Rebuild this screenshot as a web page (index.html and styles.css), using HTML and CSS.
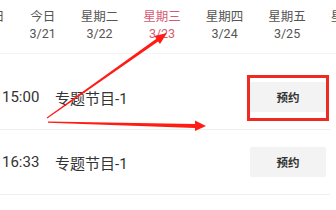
FILE: index.html
```html
<!DOCTYPE html>
<html>
<head>
<meta charset="utf-8">
<link rel="stylesheet" href="styles.css">
</head>
<body>
<div class="page">
  <div class="tabs">
    <div class="tab"><div class="lbl">星期日</div><div class="dt">3/20</div></div>
    <div class="tab"><div class="lbl">今日</div><div class="dt">3/21</div></div>
    <div class="tab"><div class="lbl">星期二</div><div class="dt">3/22</div></div>
    <div class="tab active"><div class="lbl">星期三</div><div class="dt">3/23</div></div>
    <div class="tab"><div class="lbl">星期四</div><div class="dt">3/24</div></div>
    <div class="tab"><div class="lbl">星期五</div><div class="dt">3/25</div></div>
    <div class="tab"><div class="lbl">星期六</div><div class="dt">3/26</div></div>
  </div>
  <div class="list">
    <div class="row">
      <span class="time">15:00</span>
      <span class="title">专题节目-1</span>
      <span class="btn">预约</span>
    </div>
    <div class="row">
      <span class="time">16:33</span>
      <span class="title">专题节目-1</span>
      <span class="btn">预约</span>
    </div>
  </div>
  <div class="redbox"></div>
  <svg class="arrows" width="336" height="210" viewBox="0 0 336 210">
    <polygon fill="#ff1c14" points="47.3,118.4 158.1,41.4 160,44 167,33 154.5,36 156.4,38.7 46.7,117.6"/>
    <polygon fill="#ff1c14" points="48,121.5 195,124 195,120.5 206,126 195,131 195,128 48,122.8"/>
  </svg>
</div>
</body>
</html>
```
FILE: styles.css
```css
html, body {
  margin: 0;
  padding: 0;
  background: #fff;
}
.page {
  position: relative;
  width: 336px;
  height: 210px;
  overflow: hidden;
  font-family: Roboto, "Noto Sans CJK SC", sans-serif;
}
.tabs {
  display: flex;
  gap: 25px;
  margin-left: -33px;
  padding-top: 9px;
  height: 44px;
  border-bottom: 1px solid #f3f3f3;
  white-space: nowrap;
}
.tab {
  display: flex;
  flex-direction: column;
  align-items: center;
  color: #555;
  font-size: 12.5px;
  line-height: 16px;
}
.tab .dt {
  font-size: 12.5px;
  line-height: 15px;
  margin-top: 1px;
}
.tab.active {
  color: #d65a74;
}
.list {
  padding-top: 11px;
}
.row {
  display: flex;
  align-items: center;
  height: 64px;
  border-bottom: 1px solid #efefef;
  margin-right: 6px;
  padding-left: 2px;
  color: #333;
  font-size: 15px;
}
.time {
  width: 53px;
}
.title {
  flex: 1;
}
.btn {
  width: 76px;
  height: 30px;
  margin-right: 4px;
  background: #f3f3f3;
  border-radius: 2px;
  display: flex;
  align-items: center;
  justify-content: center;
  font-size: 11.5px;
  font-weight: bold;
  color: #333;
}
.redbox {
  position: absolute;
  left: 247px;
  top: 75px;
  width: 82px;
  height: 46px;
  box-sizing: border-box;
  border: 3px solid #ee2a24;
}
.arrows {
  position: absolute;
  left: 0;
  top: 0;
}
```
